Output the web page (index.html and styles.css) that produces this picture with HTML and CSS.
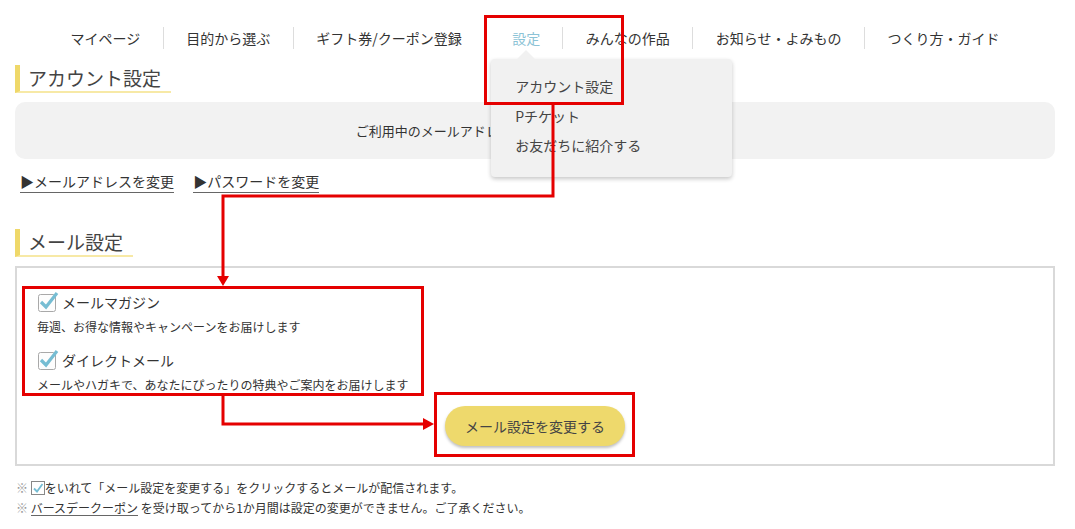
FILE: index.html
```html
<!DOCTYPE html>
<html lang="ja">
<head>
<meta charset="utf-8">
<title>アカウント設定</title>
<link rel="stylesheet" href="styles.css">
</head>
<body>
<div class="page">
<nav class="gnav">
<a href="#">マイページ</a>
<a href="#">目的から選ぶ</a>
<a href="#">ギフト券/クーポン登録</a>
<a href="#" class="current">設定
<span class="dropdown">
<span class="dd-item">アカウント設定</span>
<span class="dd-item">Pチケット</span>
<span class="dd-item">お友だちに紹介する</span>
</span>
</a>
<a href="#">みんなの作品</a>
<a href="#">お知らせ・よみもの</a>
<a href="#">つくり方・ガイド</a>
</nav>

<section>
<h2 class="ttl">アカウント設定</h2>
<div class="mailbox">ご利用中のメールアドレス：sample_user01@example.co.jp</div>
<p class="links">
<a href="#">▶メールアドレスを変更</a>
<a href="#">▶パスワードを変更</a>
</p>
</section>

<section class="mail">
<h2 class="ttl">メール設定</h2>
<div class="setbox">
<label class="opt">
<span class="chk"><svg width="22" height="22" viewBox="0 0 22 22"><rect x="1.5" y="4.5" width="17" height="17" rx="2" fill="#fdfdfd" stroke="#a9a9a9"/><path d="M4 12 L9 17 L20 3" fill="none" stroke="#76bdd3" stroke-width="3.2"/></svg></span>
<span class="opt-name">メールマガジン</span>
</label>
<p class="desc">毎週、お得な情報やキャンペーンをお届けします</p>
<label class="opt">
<span class="chk"><svg width="22" height="22" viewBox="0 0 22 22"><rect x="1.5" y="4.5" width="17" height="17" rx="2" fill="#fdfdfd" stroke="#a9a9a9"/><path d="M4 12 L9 17 L20 3" fill="none" stroke="#76bdd3" stroke-width="3.2"/></svg></span>
<span class="opt-name">ダイレクトメール</span>
</label>
<p class="desc">メールやハガキで、あなたにぴったりの特典やご案内をお届けします</p>
<div class="btn-row"><button class="btn">メール設定を変更する</button></div>
</div>
<p class="note"><span class="kome">※</span> <span class="mini"><svg width="14" height="14" viewBox="0 0 14 14"><rect x="0.5" y="0.5" width="13" height="13" fill="#fff" stroke="#888"/><path d="M3 7.5 L6 10.5 L11.5 3" fill="none" stroke="#76bdd3" stroke-width="1.8"/></svg></span>をいれて「メール設定を変更する」をクリックするとメールが配信されます。</p>
<p class="note"><span class="kome">※</span> <a href="#" class="ulink">バースデークーポン</a> を受け取ってから1か月間は設定の変更ができません。ご了承ください。</p>
</section>
</div>

<svg class="marks" width="1075" height="529" viewBox="0 0 1075 529">
<g fill="none" stroke="#e50000" stroke-width="3">
<rect x="485.5" y="16.5" width="137" height="87"/>
<rect x="23.5" y="287.5" width="399" height="107"/>
<rect x="435.5" y="393.5" width="198" height="62"/>
<path d="M553 105 V196 H223 V277"/>
<path d="M223 396 V424 H424"/>
</g>
<g fill="#e50000">
<polygon points="217,276 229,276 223,286"/>
<polygon points="423,418 423,430 434,424"/>
</g>
</svg>
</body>
</html>
```

FILE: styles.css
```css
body {
    margin: 0;
    font-family: "Noto Sans CJK JP", "Noto Sans", sans-serif;
    color: #333;
    background: #fff;
}
.page {
    width: 1040px;
    margin-left: 15px;
}
a {
    color: #333;
    text-decoration: none;
}

/* global nav */
.gnav {
    display: flex;
    justify-content: center;
    padding-top: 27px;
    font-size: 14px;
    line-height: 22px;
}
.gnav a {
    position: relative;
    padding: 0 22.5px;
    border-left: 1px solid #ddd;
}
.gnav a:first-child {
    border-left: none;
}
.gnav a.current {
    padding-left: 27px;
    padding-right: 22px;
    color: #8cc3d6;
}
.dropdown {
    position: absolute;
    left: 6px;
    top: 32px;
    width: 241px;
    height: 118px;
    box-sizing: border-box;
    padding: 13px 0 0 24px;
    background: #f1f1f1;
    border-radius: 4px;
    box-shadow: 0 2px 4px rgba(0,0,0,.22);
    z-index: 2;
}
.dropdown::before {
    content: "";
    position: absolute;
    left: 26px;
    top: -9px;
    border: 9px solid transparent;
    border-top: none;
    border-bottom-color: #f1f1f1;
}
.dd-item {
    display: block;
    color: #444;
    line-height: 29.5px;
    white-space: nowrap;
}

/* headings */
.ttl {
    display: inline-block;
    margin: 16px 0 0;
    padding: 0 10px 0 8px;
    border-left: 5px solid #efd869;
    border-bottom: 2px solid #f7e9a6;
    font-size: 19px;
    font-weight: normal;
    line-height: 26px;
    color: #444;
}
.mailbox {
    margin-top: 9px;
    height: 57px;
    line-height: 57px;
    background: #f2f2f2;
    border-radius: 10px;
    text-align: center;
    font-size: 13px;
}
.links {
    margin: 12px 0 0 5px;
    font-size: 14px;
}
.links a {
    margin-right: 16px;
    padding-bottom: 1px;
    border-bottom: 1px solid #666;
}

/* mail settings */
.mail .ttl {
    margin-top: 38px;
}
.setbox {
    margin-top: 9px;
    border: 2px solid #d9d9d9;
    padding: 22px 20px 18px;
}
.opt {
    display: flex;
    align-items: flex-end;
    gap: 3px;
    font-size: 14px;
    line-height: 20px;
}
.chk svg {
    display: block;
}
.desc {
    margin: 6px 0 12px;
    font-size: 12px;
    line-height: 18px;
}
.btn-row {
    display: flex;
    justify-content: center;
    margin-top: 1px;
}
.btn {
    width: 180px;
    height: 40px;
    border: none;
    border-radius: 20px;
    background: #eed96c;
    box-shadow: 0 2px 3px rgba(0,0,0,.25);
    font-family: inherit;
    font-size: 14px;
    color: #444;
}
.note {
    margin: 4px 0 0 1px;
    font-size: 12px;
    line-height: 16px;
}
.note:first-of-type {
    margin-top: 14px;
}
.ulink {
    display: inline-block;
    line-height: 15px;
    border-bottom: 1px solid #666;
}
.kome {
    color: #999;
}
.mini svg {
    vertical-align: -2px;
}

/* annotation overlay */
.marks {
    position: absolute;
    left: 0;
    top: 0;
    pointer-events: none;
    z-index: 5;
}
```
